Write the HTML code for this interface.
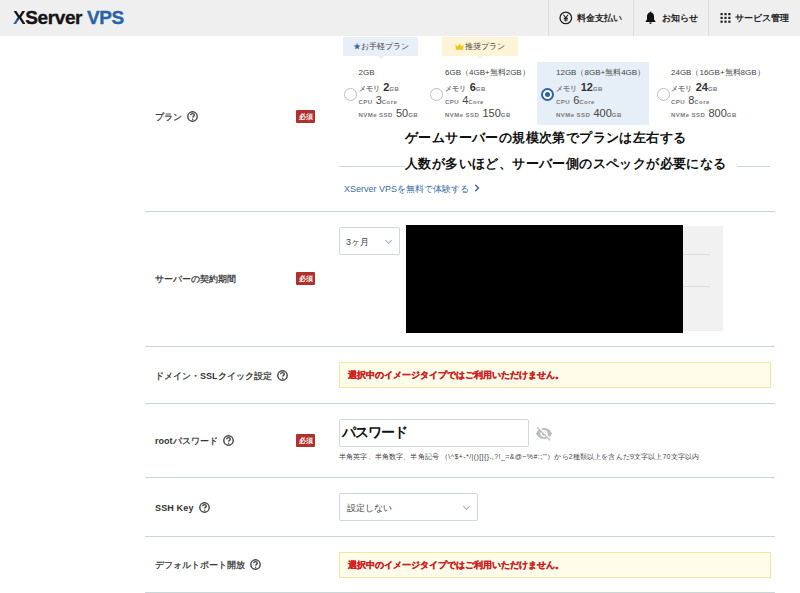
<!DOCTYPE html>
<html><head><meta charset="utf-8">
<style>
*{margin:0;padding:0;box-sizing:border-box}
html,body{width:800px;height:593px;overflow:hidden;background:#fff;font-family:"Liberation Sans",sans-serif;color:#333}
.a{position:absolute;white-space:nowrap}
#hdr{position:absolute;left:0;top:0;width:800px;height:36px;background:#efefef}
.logo{position:absolute;left:13px;top:7px;font-size:19px;font-weight:bold;letter-spacing:-0.4px;color:#141414;-webkit-text-stroke:0.35px #141414}
.logo b{color:#2865a8;-webkit-text-stroke:0.35px #2865a8}
.lx{background:linear-gradient(50deg,#2865a8 0%,#2865a8 32%,#141414 52%);-webkit-background-clip:text;background-clip:text;color:transparent;-webkit-text-stroke:0}
.sep{position:absolute;top:0;width:1px;height:36px;background:#dcdcdc}
.hitem{position:absolute;top:12px;font-size:9.2px;font-weight:bold;color:#222;white-space:nowrap}
.line{position:absolute;left:145px;width:630px;height:1px;background:#c9d7d9}
.lbl{position:absolute;left:155px;font-size:9px;color:#333;white-space:nowrap;font-weight:normal;-webkit-text-stroke:0.25px #333}
.lbl b{-webkit-text-stroke:0}
.q{display:inline-block;vertical-align:-2px;margin-left:5px}
.req{position:absolute;left:296px;width:19px;height:13px;background:#b0302c;color:#fff;font-size:6.5px;line-height:13px;text-align:center;border-radius:1px;font-weight:bold}
.tab{position:absolute;top:37px;height:19px;font-size:8px;line-height:19px;text-align:center;color:#444}
.tab:after{content:"";position:absolute;left:50%;bottom:-3px;margin-left:-3px;border-left:3px solid transparent;border-right:3px solid transparent;border-top:3px solid}
.tab1{left:343px;width:75px;background:#e9eff8}
.tab1:after{border-top-color:#e9eff8}
.tab2{left:442px;width:76px;background:#fdf4d8}
.tab2:after{border-top-color:#fdf4d8}
.radio{position:absolute;top:88px;width:13px;height:13px;border:1px solid #b9bdc6;border-radius:50%;background:#fff}
.radio.on{border:2px solid #2b64a8}
.radio.on:after{content:"";position:absolute;left:2px;top:2px;width:5px;height:5px;border-radius:50%;background:#2b64a8}
.card{position:absolute;top:68px;color:#555}
.t{font-size:8px;line-height:10px;color:#444}
.r{height:13px;line-height:13px;font-size:6px;font-weight:bold;letter-spacing:0.45px;color:#7a7a7a;white-space:nowrap}
.r b{font-size:11px;color:#333;letter-spacing:0;margin-left:1px}
.r i{font-style:normal;font-weight:normal;letter-spacing:0;font-size:11px;color:#444;margin-left:1px}
.r s{text-decoration:none;font-size:7px;color:#555}
.r u{text-decoration:none;font-size:7px;letter-spacing:0.2px;color:#777}
.sel{position:absolute;border:1px solid #cfd8dc;border-radius:2px;background:#fff;font-size:9px;color:#444}
.chev{position:absolute;width:5px;height:5px;border-right:1px solid #aab;border-bottom:1px solid #aab;transform:rotate(45deg)}
.warn{position:absolute;left:339px;width:432px;height:26px;background:#fffde9;border:1px solid #f0e8a0;color:#d42020;-webkit-text-stroke:0.25px #d42020;font-size:9px;font-weight:bold;line-height:25px;padding-left:8px}
</style></head><body>
<div id="hdr">
  <div class="logo"><span class="lx">X</span>Server <b>VPS</b></div>
  <div class="sep" style="left:548px"></div>
  <div class="sep" style="left:633px"></div>
  <div class="sep" style="left:708px"></div>
  <svg class="a" style="left:559px;top:11px" width="14" height="14" viewBox="0 0 14 14"><circle cx="6.8" cy="6.9" r="5.8" fill="none" stroke="#222" stroke-width="1.3"/><path d="M4.5 3.7L6.8 6.9L9.1 3.7M6.8 6.9V10.6M4.8 7.4H8.8M4.8 9H8.8" fill="none" stroke="#222" stroke-width="1.1"/></svg>
  <div class="hitem" style="left:577px">料金支払い</div>
  <svg class="a" style="left:645px;top:11px" width="11" height="13" viewBox="0 0 11 13"><path d="M5.5 0.6C5 0.6 4.7 1 4.7 1.5C2.9 2 2 3.5 2 5.3V8.4L0.6 10.3V11H10.4V10.3L9 8.4V5.3C9 3.5 8.1 2 6.3 1.5C6.3 1 6 0.6 5.5 0.6ZM4.2 11.6C4.3 12.4 4.8 12.9 5.5 12.9C6.2 12.9 6.7 12.4 6.8 11.6Z" fill="#111"/></svg>
  <div class="hitem" style="left:662px">お知らせ</div>
  <svg class="a" style="left:720px;top:13px" width="11" height="10" viewBox="0 0 11 10"><g fill="#222"><rect x="0.5" y="0" width="2.2" height="2.2"/><rect x="4.4" y="0" width="2.2" height="2.2"/><rect x="8.3" y="0" width="2.2" height="2.2"/><rect x="0.5" y="3.8" width="2.2" height="2.2"/><rect x="4.4" y="3.8" width="2.2" height="2.2"/><rect x="8.3" y="3.8" width="2.2" height="2.2"/><rect x="0.5" y="7.6" width="2.2" height="2.2"/><rect x="4.4" y="7.6" width="2.2" height="2.2"/><rect x="8.3" y="7.6" width="2.2" height="2.2"/></g></svg>
  <div class="hitem" style="left:735px">サービス管理</div>
</div>

<div class="line" style="top:211px"></div>
<div class="line" style="top:346px"></div>
<div class="line" style="top:403px"></div>
<div class="line" style="top:477px"></div>
<div class="line" style="top:536px"></div>
<div class="line" style="top:592px"></div>

<div class="lbl" style="top:111px">プラン<svg class="q" width="11" height="11" viewBox="0 0 11 11"><circle cx="5.5" cy="5.5" r="4.7" fill="none" stroke="#444" stroke-width="1.4"/><path d="M3.7 4.3C3.7 3.2 4.5 2.6 5.5 2.6C6.5 2.6 7.3 3.2 7.3 4.1C7.3 5.3 5.6 5.4 5.6 6.6" fill="none" stroke="#444" stroke-width="1.4"/><circle cx="5.6" cy="8.2" r="0.75" fill="#444"/></svg></div>
<div class="req" style="top:109.5px">必須</div>
<div class="lbl" style="top:273px">サーバーの契約期間</div>
<div class="req" style="top:272px">必須</div>
<div class="lbl" style="top:370px">ドメイン・<b>SSL</b>クイック設定<svg class="q" width="11" height="11" viewBox="0 0 11 11"><circle cx="5.5" cy="5.5" r="4.7" fill="none" stroke="#444" stroke-width="1.4"/><path d="M3.7 4.3C3.7 3.2 4.5 2.6 5.5 2.6C6.5 2.6 7.3 3.2 7.3 4.1C7.3 5.3 5.6 5.4 5.6 6.6" fill="none" stroke="#444" stroke-width="1.4"/><circle cx="5.6" cy="8.2" r="0.75" fill="#444"/></svg></div>
<div class="lbl" style="top:435px"><b>root</b>パスワード<svg class="q" width="11" height="11" viewBox="0 0 11 11"><circle cx="5.5" cy="5.5" r="4.7" fill="none" stroke="#444" stroke-width="1.4"/><path d="M3.7 4.3C3.7 3.2 4.5 2.6 5.5 2.6C6.5 2.6 7.3 3.2 7.3 4.1C7.3 5.3 5.6 5.4 5.6 6.6" fill="none" stroke="#444" stroke-width="1.4"/><circle cx="5.6" cy="8.2" r="0.75" fill="#444"/></svg></div>
<div class="req" style="top:434px">必須</div>
<div class="lbl" style="top:502px"><b style="letter-spacing:0.15px">SSH Key</b><svg class="q" width="11" height="11" viewBox="0 0 11 11"><circle cx="5.5" cy="5.5" r="4.7" fill="none" stroke="#444" stroke-width="1.4"/><path d="M3.7 4.3C3.7 3.2 4.5 2.6 5.5 2.6C6.5 2.6 7.3 3.2 7.3 4.1C7.3 5.3 5.6 5.4 5.6 6.6" fill="none" stroke="#444" stroke-width="1.4"/><circle cx="5.6" cy="8.2" r="0.75" fill="#444"/></svg></div>
<div class="lbl" style="top:559px">デフォルトポート開放<svg class="q" width="11" height="11" viewBox="0 0 11 11"><circle cx="5.5" cy="5.5" r="4.7" fill="none" stroke="#444" stroke-width="1.4"/><path d="M3.7 4.3C3.7 3.2 4.5 2.6 5.5 2.6C6.5 2.6 7.3 3.2 7.3 4.1C7.3 5.3 5.6 5.4 5.6 6.6" fill="none" stroke="#444" stroke-width="1.4"/><circle cx="5.6" cy="8.2" r="0.75" fill="#444"/></svg></div>

<!-- plan -->
<div class="tab tab1"><span style="color:#2b64a8">★</span>お手軽プラン</div>
<div class="tab tab2"><svg width="9" height="7" viewBox="0 0 9 7" style="vertical-align:-0.5px;margin-right:1px"><path d="M0.3 1.6L2.4 3.6L4.5 0.4L6.6 3.6L8.7 1.6L8 6.8H1Z" fill="#f0c419"/></svg>推奨プラン</div>
<div class="a" style="left:537px;top:62px;width:112px;height:63px;background:#e6eef8"></div>

<div class="radio" style="left:344px"></div>
<div class="radio" style="left:430px"></div>
<div class="radio on" style="left:541px"></div>
<div class="radio" style="left:657px"></div>

<div class="card" style="left:358.5px">
  <div class="t">2GB</div>
  <div class="r" style="margin-top:3px"><u>メモリ</u> <b>2</b>GB</div>
  <div class="r">CPU <i>3</i>Core</div>
  <div class="r">NVMe SSD <i>50</i>GB</div>
</div>
<div class="card" style="left:445px">
  <div class="t">6GB（4GB+無料2GB）</div>
  <div class="r" style="margin-top:3px"><u>メモリ</u> <b>6</b>GB</div>
  <div class="r">CPU <i>4</i>Core</div>
  <div class="r">NVMe SSD <i>150</i>GB</div>
</div>
<div class="card" style="left:556px">
  <div class="t">12GB（8GB+無料4GB）</div>
  <div class="r" style="margin-top:3px"><u>メモリ</u> <b>12</b>GB</div>
  <div class="r">CPU <i>6</i>Core</div>
  <div class="r">NVMe SSD <i>400</i>GB</div>
</div>
<div class="card" style="left:671px">
  <div class="t">24GB（16GB+無料8GB）</div>
  <div class="r" style="margin-top:3px"><u>メモリ</u> <b>24</b>GB</div>
  <div class="r">CPU <i>8</i>Core</div>
  <div class="r">NVMe SSD <i>800</i>GB</div>
</div>

<div class="a" style="left:339px;top:166px;width:431px;height:1px;background:#c9d7d9"></div>
<div class="a" style="left:405px;top:127px;font-size:13px;letter-spacing:0.4px;font-weight:bold;color:#111;background:#fff;padding:0 6px 0 0;line-height:22px">ゲームサーバーの規模次第でプランは左右する</div>
<div class="a" style="left:405px;top:153px;font-size:13px;letter-spacing:0.4px;font-weight:bold;color:#111;background:#fff;padding:0 10px 0 0;line-height:22px">人数が多いほど、サーバー側のスペックが必要になる</div>
<div class="a" style="left:344px;top:183px;font-size:9px;color:#3b6ea8">XServer VPSを無料で体験する<svg width="6" height="8" viewBox="0 0 6 8" style="margin-left:5px;vertical-align:0px"><path d="M1.2 0.8L4.4 4L1.2 7.2" fill="none" stroke="#3b6ea8" stroke-width="1.5"/></svg></div>

<!-- period -->
<div class="sel" style="left:339px;top:227px;width:61px;height:28px">
  <span class="a" style="left:6px;top:8px">3ヶ月</span>
  <span class="chev" style="left:46px;top:10px"></span>
</div>
<div class="a" style="left:683px;top:226px;width:40px;height:105px;background:#f1f1f1"></div>
<div class="a" style="left:683px;top:254px;width:27px;height:1px;background:#dcdcdc"></div>
<div class="a" style="left:683px;top:286px;width:27px;height:1px;background:#dcdcdc"></div>
<div class="a" style="left:406px;top:225px;width:277px;height:108px;background:#000"></div>

<!-- domain -->
<div class="warn" style="top:362px">選択中のイメージタイプではご利用いただけません。</div>

<!-- password -->
<div class="sel" style="left:339px;top:419px;width:190px;height:28px">
  <span class="a" style="left:1.5px;top:4px;font-size:14px;letter-spacing:-0.8px;font-weight:bold;color:#111">パスワード</span>
</div>
<div class="a" style="left:339px;top:452px;font-size:7px;color:#444;letter-spacing:0.15px">半角英字、半角数字、半角記号 （<span style="letter-spacing:0.42px">\^$+-*/|()[]{}.,?!_=&amp;@~%#:;'"</span>）から2種類以上を含んだ9文字以上70文字以内</div>

<svg class="a" style="left:535.6px;top:427.4px" width="16" height="13.4" viewBox="1 3 22 18.5"><path fill="#bdbdbd" d="M12 7c2.76 0 5 2.24 5 5 0 .65-.13 1.26-.36 1.83l2.92 2.92c1.51-1.26 2.7-2.89 3.430-4.75-1.73-4.39-6-7.5-11-7.5-1.4 0-2.74.25-3.98.7l2.16 2.16C10.74 7.13 11.35 7 12 7zM2 4.27l2.28 2.28.46.46C3.08 8.3 1.780 10.02 1 12c1.73 4.39 6 7.5 11 7.5 1.55 0 3.03-.3 4.38-.84l.42.42L19.73 22 21 20.730 3.27 3 2 4.27zM7.53 9.8l1.55 1.55c-.05.21-.08.43-.08.65 0 1.66 1.34 3 3 3 .22 0 .44-.03.65-.08l1.55 1.55c-.67.33-1.41.53-2.2.53-2.76 0-5-2.240-5-5 0-.79.2-1.53.53-2.2zm4.31-.78l3.15 3.15.02-.16c0-1.66-1.34-3-3-3l-.17.01z"/></svg>
<!-- ssh -->
<div class="sel" style="left:339px;top:493px;width:139px;height:28px">
  <span class="a" style="left:7px;top:8px">設定しない</span>
  <span class="chev" style="left:124px;top:10px"></span>
</div>

<!-- port -->
<div class="warn" style="top:552px;height:25.5px;line-height:24.5px">選択中のイメージタイプではご利用いただけません。</div>
</body></html>
